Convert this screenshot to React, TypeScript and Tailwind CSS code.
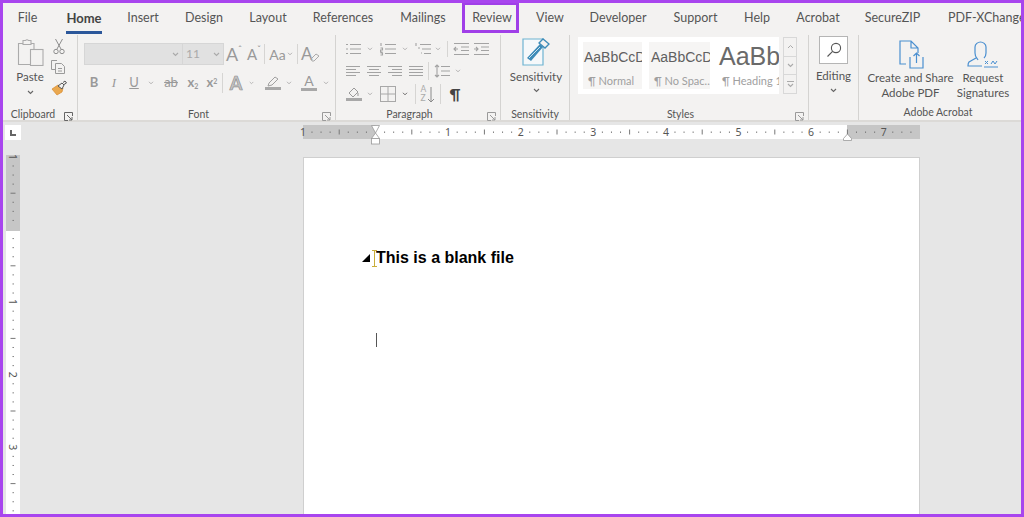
import React from "react";

const tabs: [string, string][] = [
  ["File", "w-[39px]"],
  ["Home", "w-[74px]"],
  ["Insert", "w-[44px]"],
  ["Design", "w-[78px]"],
  ["Layout", "w-[50px]"],
  ["References", "w-[100px]"],
  ["Mailings", "w-[60px]"],
  ["Review", "w-[78px]"],
  ["View", "w-[38px]"],
  ["Developer", "w-[98px]"],
  ["Support", "w-[57px]"],
  ["Help", "w-[66px]"],
  ["Acrobat", "w-[56px]"],
  ["SecureZIP", "w-[93px]"],
];

function Chev({ c = "#8f8f8f", s = 7 }: { c?: string; s?: number }) {
  return (
    <svg width={s} height={s - 2} viewBox="0 0 7 5" fill="none" stroke={c} strokeWidth="1.1">
      <path d="M1 1l2.500 2.500L6 1" />
    </svg>
  );
}

function Launcher({ c = "#9a9a9a" }: { c?: string }) {
  return (
    <svg width="9" height="9" viewBox="0 0 9 9" fill="none" stroke={c} strokeWidth="1">
      <path d="M8.500 4V.5H.5v8H4" />
      <path d="M3 3l5 5M8 5v3H5" />
    </svg>
  );
}

function Sep({ h = "h-[20px]" }: { h?: string }) {
  return <div className={`w-px bg-[#d6d5d3] ${h}`} />;
}

function Lines({ d, c = "#a3a3a3" }: { d: string; c?: string }) {
  return (
    <svg width="16" height="14" viewBox="0 0 16 14" fill="none" stroke={c} strokeWidth="1.1">
      <path d={d} />
    </svg>
  );
}

function Group({
  label,
  className,
  launcher,
  labelClass = "",
  lc,
  children,
}: {
  label: string;
  className: string;
  launcher?: boolean;
  labelClass?: string;
  lc?: string;
  children: React.ReactNode;
}) {
  return (
    <div className={`relative flex h-full flex-col border-r border-[#d4d3d1] ${className}`}>
      <div className="h-[72px] flex-none">{children}</div>
      <div className={`flex-none text-center text-[10.5px] leading-[15px] text-[#555] ${labelClass}`}>{label}</div>
      {launcher && (
        <div className="absolute right-[4px] bottom-[-1px]">
          <Launcher c={lc} />
        </div>
      )}
    </div>
  );
}

function HRuler() {
  const o = 72.5;
  const st = 9.075;
  const ticks: React.ReactNode[] = [];
  for (let k = -7; k <= 59; k++) {
    const x = o + k * st;
    const m = ((k % 8) + 8) % 8;
    if (m === 0) continue;
    ticks.push(
      m === 4 ? (
        <rect key={k} x={x - 0.5} y={4.5} width={1} height={5} fill="#777" />
      ) : (
        <rect key={k} x={x - 0.5} y={6.5} width={1} height={1.4} fill="#777" />
      ),
    );
  }
  const nums: [string, number][] = [
    ["1", -1], ["1", 1], ["2", 2], ["3", 3], ["4", 4], ["5", 5], ["6", 6], ["7", 7],
  ];
  return (
    <svg width="617" height="21" viewBox="0 0 617 21" className="block overflow-visible">
      <rect x="0" y="0" width="617" height="14" fill="#fff" />
      <rect x="0" y="0" width="72.5" height="14" fill="#c6c6c6" />
      <rect x="544" y="0" width="73" height="14" fill="#c6c6c6" />
      {ticks}
      {nums.map(([t, n], i) => (
        <text key={i} x={o + n * 72.6} y="11" textAnchor="middle" fontSize="10.5" fill="#555" fontFamily="Noto Sans, sans-serif">
          {t}
        </text>
      ))}
      <path d="M68.500.5h8L72.500 8zM72.500 8l4 5.500h-8z" fill="#fff" stroke="#999" strokeWidth=".8" />
      <rect x="68.500" y="13.500" width="8" height="5.500" fill="#fff" stroke="#999" strokeWidth=".8" />
      <path d="M544.500 9l4 4.500v2h-8v-2z" fill="#fff" stroke="#999" strokeWidth=".8" />
    </svg>
  );
}

function VRuler() {
  const o = 74.5;
  const st = 9.075;
  const ticks: React.ReactNode[] = [];
  for (let k = -8; k <= 32; k++) {
    const y = o + k * st;
    const m = ((k % 8) + 8) % 8;
    if (m === 0) continue;
    ticks.push(
      m === 4 ? (
        <rect key={k} x={4.5} y={y - 0.5} width={5} height={1} fill="#777" />
      ) : (
        <rect key={k} x={6.5} y={y - 0.5} width={1.4} height={1} fill="#777" />
      ),
    );
  }
  const nums: [string, number][] = [["1", -1], ["1", 1], ["2", 2], ["3", 3]];
  return (
    <svg width="14" height="359" viewBox="0 0 14 359" className="block">
      <rect x="0" y="0" width="14" height="359" fill="#fff" />
      <rect x="0" y="0" width="14" height="76" fill="#c6c6c6" />
      {ticks}
      {nums.map(([t, n], i) => {
        const y = o + n * 72.6;
        return (
          <text key={i} x="7" y={y} transform={`rotate(90 7 ${y})`} dy="3.6" textAnchor="middle" fontSize="10.5" fill="#555" fontFamily="Noto Sans, sans-serif">
            {t}
          </text>
        );
      })}
    </svg>
  );
}

function StyleCard({ cardClass, sample, sampleClass, name }: { cardClass: string; sample: string; sampleClass: string; name: string }) {
  return (
    <div className={`flex h-[47px] flex-none flex-col overflow-hidden ${cardClass}`}>
      <div className={`h-[30px] overflow-hidden whitespace-nowrap ${sampleClass}`} style={{ fontFamily: '"Liberation Sans", sans-serif' }}>{sample}</div>
      <div className="mt-[1px] whitespace-nowrap pl-[5px] text-[11px] leading-[16px] text-[#a0a0a0]">{name}</div>
    </div>
  );
}

export default function App() {
  return (
    <div
      className="relative box-border h-[517px] w-[1024px] overflow-hidden border-[3px] border-[#a845ee] bg-[#e6e6e6] text-[#555]"
      style={{ fontFamily: 'Lato, "Noto Sans", sans-serif' }}
    >
      {/* Ribbon */}
      <div className="h-[119px] border-b-2 border-[#dcdad7] bg-[#f3f2f1]">
        <div className="flex h-[31px] items-center pl-[5px] text-[12.5px] text-[#555]">
          {tabs.map(([t, w]) => (
            <div key={t} className={`relative flex-none text-center ${w} ${t === "Home" ? "text-[13px] font-bold text-[#444]" : ""}`}>
              {t}
              {t === "Home" && <div className="absolute bottom-[-6px] left-[19px] h-[3px] w-[36px] bg-[#2b579a]" />}
            </div>
          ))}
          <div className="flex-none whitespace-nowrap pl-[9px]">PDF-XChange</div>
        </div>

        <div className="flex h-[86px] pt-[1px]">
          {/* Clipboard */}
          <Group label="Clipboard" className="w-[75px] flex-none" launcher lc="#666" labelClass="pr-[14px]">
            <div className="flex h-full pl-[12px]">
              <div className="flex w-[30px] flex-col items-center pt-[3px]">
                <svg width="28" height="28" viewBox="0 0 28 28" fill="none" stroke="#ababab" strokeWidth="1.1">
                  <path d="M15 5.500h3v12M11 5.500H2.500v21H14" />
                  <path d="M7 2.500h2.500a2 2 0 0 1 3 0H15v4H7z" fill="#f3f2f1" />
                  <rect x="14.500" y="11.500" width="12.500" height="16" fill="#f3f2f1" />
                </svg>
                <div className="mt-[3px] text-[11.5px] leading-[16px] text-[#555]">Paste</div>
                <div className="mt-[5px]"><Chev c="#666" /></div>
              </div>
              <div className="ml-[3px] flex w-[22px] flex-col items-center pt-[3px]">
                <svg width="12" height="17" viewBox="0 0 12 17" fill="none" stroke="#8e8e8e" strokeWidth="1">
                  <path d="M2.500 1L8 11M9.500 1L4 11" />
                  <circle cx="3" cy="13.500" r="2.200" />
                  <circle cx="9" cy="13.500" r="2.200" />
                </svg>
                <svg className="mt-[4px] ml-[-2px]" width="17" height="15" viewBox="0 0 17 15" fill="none" stroke="#9a9a9a" strokeWidth="1">
                  <path d="M7 1.500H1.500v9H5" />
                  <path d="M5.500 4.500h6l3 3v7h-9zM8 9.500h4M8 12h4" />
                </svg>
                <svg className="mt-[6px]" width="17" height="16" viewBox="0 0 17 16">
                  <path d="M1 9l5 6 5-3 1-4-5-3z" fill="#eaa84f" stroke="#d98a2b" strokeWidth=".7" />
                  <path d="M7 6l4-3 2 2-2 4zM12 2.500l2-1.500 1.500 2-2.500 1.500" fill="#f3f2f1" stroke="#555" strokeWidth="1" />
                </svg>
              </div>
            </div>
          </Group>

          {/* Font */}
          <Group label="Font" className="w-[258px] flex-none" launcher labelClass="pr-[16px]">
            <div className="flex h-full flex-col pl-[6px]">
              <div className="mt-[8px] flex h-[22px] items-center">
                <div className="flex h-[22px] w-[99px] items-center justify-end border border-[#d6d6d6] bg-[#e1e1e1] pr-[3px]"><Chev c="#aaa" /></div>
                <div className="flex h-[22px] w-[41px] items-center justify-between border border-l-0 border-[#d6d6d6] bg-[#e1e1e1] pl-[3px] pr-[3px] text-[12px] text-[#aaa]">11<Chev c="#aaa" /></div>
                <div className="ml-[1px] flex w-[18px] items-start justify-center text-[18px] leading-[22px] text-[#999]">A<span className="text-[9px] leading-[14px]">ˆ</span></div>
                <div className="ml-[2px] flex w-[18px] items-start justify-center text-[15px] leading-[22px] text-[#999]">A<span className="text-[9px] leading-[14px]">ˇ</span></div>
                <div className="ml-[1px]"><Sep /></div>
                <div className="flex w-[32px] items-center justify-center gap-[1px] text-[14px] text-[#999]">Aa<Chev c="#aaa" s={6} /></div>
                <div><Sep /></div>
                <div className="ml-[3px] text-[17px] text-[#999]">A</div>
                <svg className="mt-[6px] ml-[-3px]" width="11" height="9" viewBox="0 0 11 9"><path d="M1 6l5-5 3 2-5 5H2z" fill="none" stroke="#aaa" /></svg>
              </div>
              <div className="mt-[6px] flex h-[24px] items-center text-[#999]">
                <div className="w-[20px] text-center text-[13px] font-bold">B</div>
                <div className="w-[20px] text-center text-[13px] italic" style={{ fontFamily: '"Liberation Serif", serif' }}>I</div>
                <div className="w-[20px] text-center text-[13px] underline">U</div>
                <div className="flex w-[14px] justify-center"><Chev c="#aaa" s={6} /></div>
                <div className="w-[26px] text-center text-[13px] line-through">ab</div>
                <div className="w-[18px] text-center text-[13px] font-bold">x<sub className="text-[7px]">2</sub></div>
                <div className="w-[20px] text-center text-[13px] font-bold">x<sup className="text-[7px]">2</sup></div>
                <Sep />
                <div className="w-[26px] text-center text-[18px] font-bold leading-[22px] text-[#c4c4c4]" style={{ WebkitTextStroke: "0.7px #8f8f8f" }}>A</div>
                <div className="flex w-[5px] justify-center"><Chev c="#aaa" s={6} /></div>
                <div className="ml-[9px] flex w-[20px] flex-col items-center">
                  <svg width="14" height="11" viewBox="0 0 14 11" fill="none" stroke="#a0a0a0"><path d="M2 10l1-3 6-6 3 2-6 6z" /></svg>
                  <div className="h-[3px] w-[16px] bg-[#a8a8a8]" />
                </div>
                <div className="ml-[2px] flex w-[8px] justify-center"><Chev c="#aaa" s={6} /></div>
                <div className="ml-[7px] flex w-[18px] flex-col items-center">
                  <div className="text-[14px] leading-[12px]">A</div>
                  <div className="mt-[1px] h-[3px] w-[16px] bg-[#a8a8a8]" />
                </div>
                <div className="ml-[3px] flex w-[10px] justify-center"><Chev c="#aaa" s={6} /></div>
              </div>
            </div>
          </Group>

          {/* Paragraph */}
          <Group label="Paragraph" className="w-[165px] flex-none" launcher labelClass="pr-[17px]">
            <div className="flex h-full flex-col pl-[9px]">
              <div className="mt-[4px] flex h-[20px] items-center">
                <Lines d="M5 2.500h11M5 7h11M5 11.500h11M1 2.500h2M1 7h2M1 11.500h2" />
                <div className="ml-[3px] flex w-[12px] justify-center"><Chev c="#aaa" s={6} /></div>
                <div className="ml-[4px]"><Lines d="M5 2.500h11M5 7h11M5 11.500h11M1 1v3M.5 6h2v2h-2v2h2M.5 11h2v2h-2" /></div>
                <div className="ml-[3px] flex w-[12px] justify-center"><Chev c="#aaa" s={6} /></div>
                <div className="ml-[4px]"><Lines d="M5 2.500h11M7 7h9M9 11.500h7M1 1v3M3 6h2M6 11h1" /></div>
                <div className="ml-[1px] flex w-[12px] justify-center"><Chev c="#aaa" s={6} /></div>
                <div className="ml-[3px]"><Sep h="h-[16px]" /></div>
                <div className="ml-[5px]"><Lines d="M1 1.500h15M8 5h8M8 8.500h8M1 12.500h15M5 7H1M3 5l-2 2 2 2" /></div>
                <div className="ml-[4px]"><Lines d="M1 1.500h15M8 5h8M8 8.500h8M1 12.500h15M1 7h4M3 5l2 2-2 2" /></div>
              </div>
              <div className="mt-[2px] flex h-[20px] items-center gap-[5px]">
                <Lines d="M1 2.500h14M1 5.500h10M1 8.500h14M1 11.500h10" />
                <Lines d="M1 2.500h14M3 5.500h10M1 8.500h14M3 11.500h10" />
                <Lines d="M1 2.500h14M5 5.500h10M1 8.500h14M5 11.500h10" />
                <Lines d="M1 2.500h14M1 5.500h14M1 8.500h14M1 11.500h14" />
                <div className="ml-[-1px]"><Sep h="h-[18px]" /></div>
                <Lines d="M7 2.500h9M7 7h9M7 11.500h9M3 1v12M1 3l2-2 2 2M1 11l2 2 2-2" />
                <Chev c="#aaa" s={6} />
              </div>
              <div className="mt-[2px] flex h-[22px] items-center">
                <div className="flex w-[18px] flex-col items-center">
                  <svg width="14" height="11" viewBox="0 0 14 11" fill="none" stroke="#999"><path d="M2 6l5-5 4 4-5 5zM11 6v3" /></svg>
                  <div className="h-[3px] w-[16px] bg-[#a8a8a8]" />
                </div>
                <div className="ml-[1px] flex w-[12px] justify-center"><Chev c="#aaa" s={6} /></div>
                <div className="ml-[4px]">
                  <svg width="16" height="16" viewBox="0 0 16 16" fill="none" stroke="#a8a8a8"><rect x=".5" y=".5" width="15" height="15" /><path d="M8 0v16M0 8h16" /></svg>
                </div>
                <div className="ml-[3px] flex w-[12px] justify-center"><Chev c="#555" s={6} /></div>
                <div className="ml-[4px]"><Sep h="h-[20px]" /></div>
                <div className="flex w-[24px] items-center justify-center">
                  <div className="text-[8.5px] leading-[9px] text-[#aaa]">A<br />Z</div>
                  <svg className="ml-[1px]" width="8" height="17" viewBox="0 0 8 17" fill="none" stroke="#8a8a8a"><path d="M4 1v15M1 13l3 3 3-3" /></svg>
                </div>
                <Sep h="h-[20px]" />
                <div className="w-[28px] text-center text-[15px] font-bold text-[#444]">¶</div>
              </div>
            </div>
          </Group>

          {/* Sensitivity */}
          <Group label="Sensitivity" className="w-[69px] flex-none">
            <div className="flex h-full flex-col items-center pl-[2px] pt-[3px]">
              <svg width="30" height="28" viewBox="0 0 30 28" fill="none">
                <path d="M2 1h20v26H2z" fill="#f5f8fa" stroke="#6fb4d2" strokeWidth="1.2" />
                <path d="M6 20L19 6l3 3L10 23z" fill="#3d8bb8" />
                <path d="M8 20l11-11" stroke="#d9ecf5" strokeWidth=".9" />
                <path d="M18 5l4-4 6 5-4 4z" fill="#f3f2f1" stroke="#3d8bb8" strokeWidth="1.3" />
              </svg>
              <div className="mt-[2px] text-[11.5px] leading-[18px]">Sensitivity</div>
              <div className="mt-[2px]"><Chev c="#666" /></div>
            </div>
          </Group>

          {/* Styles */}
          <Group label="Styles" className="w-[239px] flex-none" launcher labelClass="pr-[17px]">
            <div className="flex h-full pl-[8px] pt-[2px]">
              <div className="flex h-[57px] w-[201px] flex-none items-center gap-[7px] bg-white pl-[5px]">
                <StyleCard cardClass="w-[59px] bg-[#f6f5f4]" sampleClass="text-[14px] leading-[30px] text-[#606060] pl-[1px]" sample="AaBbCcDc" name="¶ Normal" />
                <StyleCard cardClass="w-[61px] bg-[#f6f5f4]" sampleClass="text-[14px] leading-[30px] text-[#606060] pl-[2px]" sample="AaBbCcDc" name="¶ No Spac..." />
                <StyleCard cardClass="w-[62px]" sampleClass="text-[25px] leading-[28px] text-[#6a6a6a] pl-[2px]" sample="AaBbCc" name="¶ Heading 1" />
              </div>
              <div className="ml-[4px] flex h-[57px] w-[14px] flex-none flex-col border border-[#d8d8d8]">
                <div className="flex flex-1 items-center justify-center border-b border-[#d8d8d8]"><svg width="7" height="5" viewBox="0 0 7 5" fill="none" stroke="#aaa"><path d="M1 4l2.500-2.500L6 4" /></svg></div>
                <div className="flex flex-1 items-center justify-center border-b border-[#d8d8d8]"><Chev c="#aaa" /></div>
                <div className="flex flex-1 flex-col items-center justify-center"><div className="mb-[1px] h-px w-[7px] bg-[#aaa]" /><Chev c="#aaa" /></div>
              </div>
            </div>
          </Group>

          {/* Editing */}
          <div className="flex h-[85px] w-[50px] flex-none flex-col items-center border-r border-[#d4d3d1] pt-[1px]">
            <div className="flex h-[28px] w-[29px] items-center justify-center border border-[#b5b5b5] bg-white">
              <svg width="16" height="16" viewBox="0 0 16 16" fill="none" stroke="#555" strokeWidth="1.1">
                <circle cx="10" cy="6" r="4.600" />
                <path d="M6.600 9.400L1.500 14.500" />
              </svg>
            </div>
            <div className="mt-[3px] text-[11.5px] leading-[18px]">Editing</div>
            <div className="mt-[3px]"><Chev c="#666" /></div>
          </div>

          {/* Adobe */}
          <div className="flex w-[162px] flex-none flex-col">
            <div className="flex h-[72px]">
              <div className="flex w-[103px] flex-none flex-col items-center pt-[5px]">
                <svg width="26" height="29" viewBox="0 0 26 29" fill="none" stroke="#4a8fd0" strokeWidth="1.2">
                  <path d="M8 24H2V1h11l7 7v5M13 1v7h7" />
                  <path d="M12 17v11h13V17M18.500 23V13M15.500 16l3-3 3 3" />
                </svg>
                <div className="mt-[1px] whitespace-nowrap text-center text-[11.5px] leading-[15px]">Create and Share<br />Adobe PDF</div>
              </div>
              <div className="ml-[-9px] flex w-[60px] flex-none flex-col items-center pt-[5px]">
                <svg width="32" height="29" viewBox="0 0 32 29" fill="none" stroke="#4a8fd0" strokeWidth="1.2">
                  <path d="M11 20c-1-2-3-3-3-7V7c0-3 3-5 5.500-5S19 4 19 7v6c0 2-1 4-2 5M9 18l-7 4c-1 1-1 2-1 4h14" />
                  <path d="M18 21l3 3m0-3l-3 3M24 24l2-3 2 3 2-3M17 27h14" strokeWidth="1" />
                </svg>
                <div className="mt-[1px] whitespace-nowrap text-center text-[11.5px] leading-[15px]">Request<br />Signatures</div>
              </div>
            </div>
            <div className="pr-[4px] text-center text-[10.5px] leading-[15px] text-[#555]">Adobe Acrobat</div>
          </div>
        </div>
      </div>

      {/* Workspace */}
      <div className="flex">
        <div className="flex w-[18px] flex-none flex-col pl-[2px] pt-[3px]">
          <div className="flex h-[15px] w-[16px] items-center justify-center bg-white">
            <svg width="6" height="6" viewBox="0 0 6 6"><path d="M0 0h2v4h4v2H0z" fill="#666" /></svg>
          </div>
          <div className="ml-[1px] mt-[15px]"><VRuler /></div>
        </div>
        <div className="flex-1 pl-[282px] pt-[3px]">
          <div className="h-[14px]"><HRuler /></div>
          <div className="mt-[18px] h-[360px] w-[617px] border-l border-t border-r border-[#cfcfcf] bg-white pl-[72px] pt-[91px]">
            <div className="relative text-[16px] font-bold leading-[18px] text-black" style={{ fontFamily: '"Liberation Sans", Arial, sans-serif' }}>
              <div className="absolute left-[-14px] top-[5px] h-0 w-0 border-b-[8px] border-l-[8px] border-b-black border-l-transparent" />
              <svg className="absolute left-[-4px] top-[1px]" width="5" height="17" viewBox="0 0 5 17" fill="none" stroke="#c9ad3a"><path d="M0 .5h5M0 16.500h5M2.500 0v17" /></svg>
              This is a blank file
            </div>
            <div className="mt-[66px] h-[14px] w-px bg-[#555]" />
          </div>
        </div>
      </div>

      {/* Highlight around Review */}
      <div className="absolute left-[459px] top-[-1px] h-[31px] w-[57px] border-[3px] border-[#a03fe8]" />
    </div>
  );
}
